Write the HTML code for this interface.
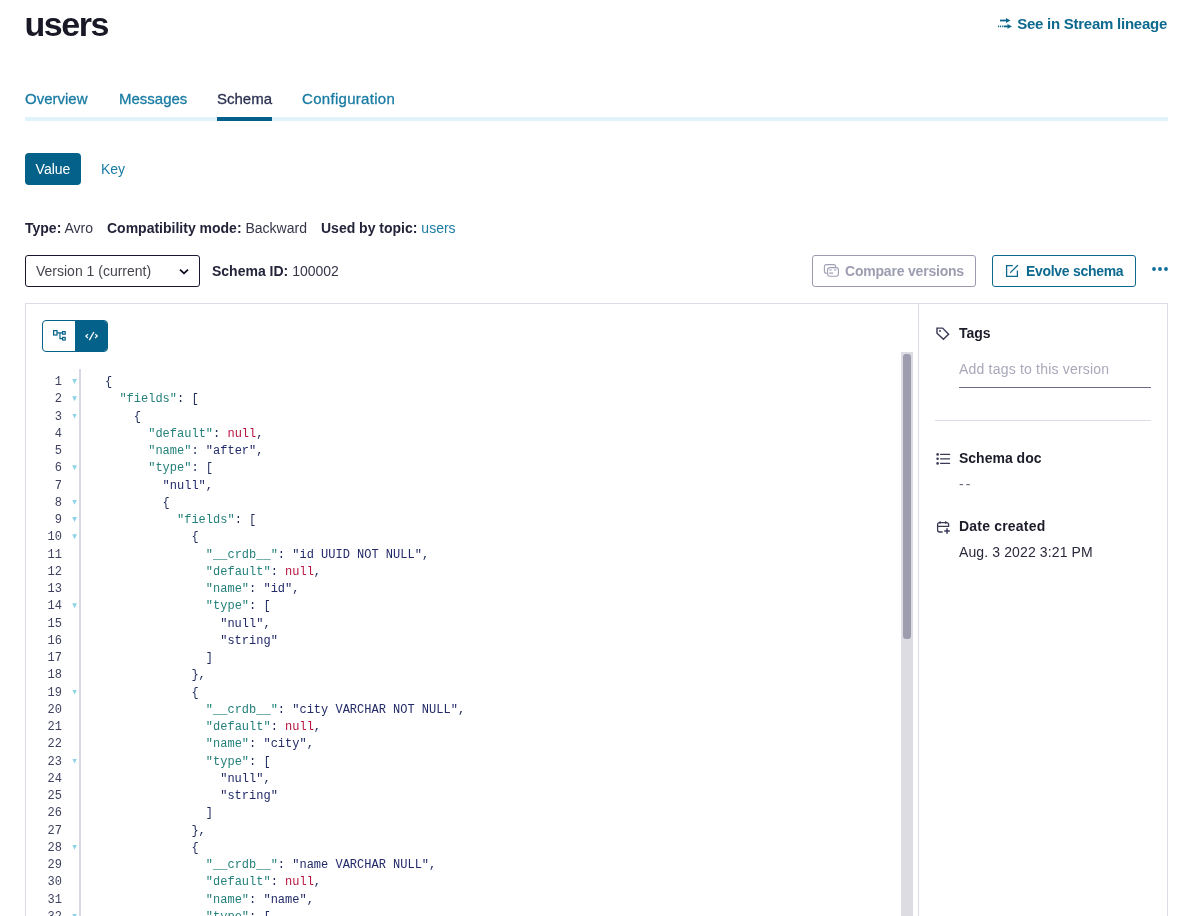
<!DOCTYPE html>
<html><head><meta charset="utf-8">
<style>
*{box-sizing:border-box;margin:0;padding:0}
html,body{width:1189px;height:916px;overflow:hidden;background:#fff}
body{position:relative;will-change:transform;font-family:"Liberation Sans",sans-serif;color:#23233a}
.abs{position:absolute;white-space:nowrap}
.title{left:24.6px;top:4px;font-size:34px;letter-spacing:-1.5px;font-weight:bold;color:#181826;line-height:40px}
.lineage{right:22px;top:14px;font-size:15px;font-weight:bold;letter-spacing:-0.25px;color:#0d6a8e;line-height:20px}
.tab{top:89px;font-size:15px;color:#1a7ba3;line-height:20px;-webkit-text-stroke:0.3px currentColor}
.tabbar{left:25px;top:117px;width:1143px;height:4px;background:#e1f3fa}
.tabact{left:217px;top:117px;width:55px;height:4px;background:#04608a}
.btnval{left:25px;top:153px;width:56px;height:32px;background:#04628a;border-radius:4px;color:#fff;font-size:14px;line-height:32px;text-align:center}
.key{left:101px;top:153px;line-height:32px;font-size:14px;color:#1a7ba3}
.info{top:218px;font-size:14px;line-height:20px;color:#35354a}
.info b{color:#23233a}
.select{left:25px;top:255px;width:175px;height:32px;border:1px solid #181830;border-radius:3px}
.seltext{left:36px;top:261px;font-size:14px;line-height:20px;color:#45454f}
.btn{top:255px;height:32px;border-radius:3px;border:1px solid #9a9ab0;font-size:14px;font-weight:bold;line-height:30px}
.panel{left:25px;top:303px;width:1143px;height:700px;border:1px solid #dcdce4}
.divider{left:918px;top:304px;width:1px;height:700px;background:#dcdce4}
.tog{left:42px;top:320px;width:66px;height:32px;border:1px solid #04628a;border-radius:4px;overflow:hidden}
.code{left:25px;top:374px;font-family:"Liberation Mono",monospace;font-size:12px;line-height:17.26px}
.ln{position:absolute;left:0;width:37px;text-align:right;color:#3e4260}
.gut{left:79px;top:369px;width:2px;height:600px;background:#d8d8e2}
.k{color:#24807a}.s{color:#222a68}.p{color:#1e2a5c}.n{color:#b8143f}
.track{left:901px;top:352px;width:12px;height:600px;background:#dcdce2}
.thumb{left:903px;top:354px;width:8px;height:285px;background:#9e9db0;border-radius:3px}
.side{font-size:14px;line-height:20px}
.row{position:relative;height:17.26px;white-space:pre}
.txt{position:absolute;left:80px}
.fold{position:absolute;left:47.2px;top:5px;width:4.8px;height:5px;background:#8dd3e6;clip-path:polygon(0 0,100% 0,50% 100%)}
</style></head><body>
<div class="abs title">users</div>
<div class="abs lineage"><svg width="16" height="12" viewBox="0 0 16 12" style="position:absolute;left:-19.5px;top:3.5px"><g fill="#0d6a8e"><rect x="2" y="1.6" width="7" height="1.8"/><polygon points="8,0 12.5,2.5 8,5"/><rect x="0" y="7.6" width="1.1" height="1.6"/><rect x="1.9" y="7.6" width="1.1" height="1.6"/><rect x="3.8" y="7.6" width="1.1" height="1.6"/><rect x="5.6" y="7.5" width="4.5" height="1.8"/><polygon points="9.5,6 14,8.4 9.5,10.8"/></g></svg>See in Stream lineage</div>

<div class="abs tab" style="left:25px">Overview</div>
<div class="abs tab" style="left:119px">Messages</div>
<div class="abs tab" style="left:217px;color:#2b3150">Schema</div>
<div class="abs tab" style="left:302px;letter-spacing:0.3px">Configuration</div>
<div class="abs tabbar"></div>
<div class="abs tabact"></div>

<div class="abs btnval">Value</div>
<div class="abs key">Key</div>

<div class="abs info" style="left:25px"><b>Type:</b> Avro</div>
<div class="abs info" style="left:107px"><b>Compatibility mode:</b> Backward</div>
<div class="abs info" style="left:321px"><b>Used by topic:</b> <span style="color:#1a7ba3">users</span></div>

<div class="abs select"></div>
<div class="abs seltext">Version 1 (current)</div>
<svg class="abs" style="left:178.5px;top:267.5px" width="10" height="7" viewBox="0 0 10 7"><path d="M1 1.6 L5 5.4 L9 1.6" fill="none" stroke="#0a0a1e" stroke-width="1.7"/></svg>
<div class="abs info" style="left:212px;top:261px"><b>Schema ID:</b> 100002</div>

<div class="abs btn" style="left:812px;width:164px;color:#9d9db2;"><svg style="position:absolute;left:10px;top:7px" width="17" height="15" viewBox="0 0 17 15" fill="none" stroke="#a0a0b4" stroke-width="1.1"><path d="M4.4 10.2 H3.4 a2 2 0 0 1 -2 -2 V3.6 a2 2 0 0 1 2 -2 H10.6 a2 2 0 0 1 2 2 V4.4"/><rect x="4.6" y="4.6" width="10.8" height="8.7" rx="2.2"/><path d="M6.2 7 H8.8 M10.9 7 H13.4 M6.2 10.2 H10.2" stroke-width="1.2"/></svg><span style="position:absolute;left:32px;letter-spacing:-0.2px">Compare versions</span></div>
<div class="abs btn" style="left:992px;width:144px;color:#0d6a8e;border-color:#0d6a8e"><svg style="position:absolute;left:12px;top:8px" width="14" height="14" viewBox="0 0 14 14" fill="none" stroke="#0d6a8e" stroke-width="1.3"><path d="M7.8 1.6 H1.6 V12.3 H12.4 V6.4"/><path d="M5.6 8.4 L12.5 1.5" stroke-linecap="round"/></svg><span style="position:absolute;left:33px;letter-spacing:-0.3px">Evolve schema</span></div>
<div class="abs" style="left:1152px;top:267px;font-size:0"><svg width="16" height="4"><circle cx="2" cy="2" r="1.9" fill="#0a6e9a"/><circle cx="8" cy="2" r="1.9" fill="#0a6e9a"/><circle cx="14" cy="2" r="1.9" fill="#0a6e9a"/></svg></div>

<div class="abs panel"></div>
<div class="abs divider"></div>
<div class="abs tog"><div style="position:absolute;left:32.2px;top:0;width:34px;height:32px;background:#04628a"></div>
<svg style="position:absolute;left:8px;top:8px" width="16" height="13" viewBox="0 0 16 13" fill="none" stroke="#04628a" stroke-width="1.2"><rect x="2.6" y="1.6" width="3.4" height="4.4"/><rect x="11.6" y="2.6" width="2.6" height="2.6"/><rect x="11.6" y="8.4" width="2.6" height="2.6"/><path d="M6 3.9 H11.6 M9 3.9 V9.7 H11.6"/></svg>
<svg style="position:absolute;left:42px;top:9.8px" width="14" height="12" viewBox="0 0 14 12" fill="none" stroke="#fff" stroke-width="1.1"><path d="M3.1 3.1 L0.9 5.0 L2.9 7.1 M10.3 3.1 L12.3 5.0 L10.0 7.1 M8.9 1.0 L4.3 9.1" stroke-width="1.25"/></svg></div>

<div class="abs gut"></div>
<div class="abs track"></div>
<div class="abs thumb"></div>

<div class="abs code" id="code">
<div class="row"><span class="ln">1</span><i class="fold"></i><span class="txt"><span class="p">{</span></span></div>
<div class="row"><span class="ln">2</span><i class="fold"></i><span class="txt">&nbsp;&nbsp;<span class="k">&quot;fields&quot;</span><span class="p">: </span><span class="p">[</span></span></div>
<div class="row"><span class="ln">3</span><i class="fold"></i><span class="txt">&nbsp;&nbsp;&nbsp;&nbsp;<span class="p">{</span></span></div>
<div class="row"><span class="ln">4</span><span class="txt">&nbsp;&nbsp;&nbsp;&nbsp;&nbsp;&nbsp;<span class="k">&quot;default&quot;</span><span class="p">: </span><span class="n">null</span><span class="p">,</span></span></div>
<div class="row"><span class="ln">5</span><span class="txt">&nbsp;&nbsp;&nbsp;&nbsp;&nbsp;&nbsp;<span class="k">&quot;name&quot;</span><span class="p">: </span><span class="s">&quot;after&quot;</span><span class="p">,</span></span></div>
<div class="row"><span class="ln">6</span><i class="fold"></i><span class="txt">&nbsp;&nbsp;&nbsp;&nbsp;&nbsp;&nbsp;<span class="k">&quot;type&quot;</span><span class="p">: </span><span class="p">[</span></span></div>
<div class="row"><span class="ln">7</span><span class="txt">&nbsp;&nbsp;&nbsp;&nbsp;&nbsp;&nbsp;&nbsp;&nbsp;<span class="s">&quot;null&quot;</span><span class="p">,</span></span></div>
<div class="row"><span class="ln">8</span><i class="fold"></i><span class="txt">&nbsp;&nbsp;&nbsp;&nbsp;&nbsp;&nbsp;&nbsp;&nbsp;<span class="p">{</span></span></div>
<div class="row"><span class="ln">9</span><i class="fold"></i><span class="txt">&nbsp;&nbsp;&nbsp;&nbsp;&nbsp;&nbsp;&nbsp;&nbsp;&nbsp;&nbsp;<span class="k">&quot;fields&quot;</span><span class="p">: </span><span class="p">[</span></span></div>
<div class="row"><span class="ln">10</span><i class="fold"></i><span class="txt">&nbsp;&nbsp;&nbsp;&nbsp;&nbsp;&nbsp;&nbsp;&nbsp;&nbsp;&nbsp;&nbsp;&nbsp;<span class="p">{</span></span></div>
<div class="row"><span class="ln">11</span><span class="txt">&nbsp;&nbsp;&nbsp;&nbsp;&nbsp;&nbsp;&nbsp;&nbsp;&nbsp;&nbsp;&nbsp;&nbsp;&nbsp;&nbsp;<span class="k">&quot;__crdb__&quot;</span><span class="p">: </span><span class="s">&quot;id UUID NOT NULL&quot;</span><span class="p">,</span></span></div>
<div class="row"><span class="ln">12</span><span class="txt">&nbsp;&nbsp;&nbsp;&nbsp;&nbsp;&nbsp;&nbsp;&nbsp;&nbsp;&nbsp;&nbsp;&nbsp;&nbsp;&nbsp;<span class="k">&quot;default&quot;</span><span class="p">: </span><span class="n">null</span><span class="p">,</span></span></div>
<div class="row"><span class="ln">13</span><span class="txt">&nbsp;&nbsp;&nbsp;&nbsp;&nbsp;&nbsp;&nbsp;&nbsp;&nbsp;&nbsp;&nbsp;&nbsp;&nbsp;&nbsp;<span class="k">&quot;name&quot;</span><span class="p">: </span><span class="s">&quot;id&quot;</span><span class="p">,</span></span></div>
<div class="row"><span class="ln">14</span><i class="fold"></i><span class="txt">&nbsp;&nbsp;&nbsp;&nbsp;&nbsp;&nbsp;&nbsp;&nbsp;&nbsp;&nbsp;&nbsp;&nbsp;&nbsp;&nbsp;<span class="k">&quot;type&quot;</span><span class="p">: </span><span class="p">[</span></span></div>
<div class="row"><span class="ln">15</span><span class="txt">&nbsp;&nbsp;&nbsp;&nbsp;&nbsp;&nbsp;&nbsp;&nbsp;&nbsp;&nbsp;&nbsp;&nbsp;&nbsp;&nbsp;&nbsp;&nbsp;<span class="s">&quot;null&quot;</span><span class="p">,</span></span></div>
<div class="row"><span class="ln">16</span><span class="txt">&nbsp;&nbsp;&nbsp;&nbsp;&nbsp;&nbsp;&nbsp;&nbsp;&nbsp;&nbsp;&nbsp;&nbsp;&nbsp;&nbsp;&nbsp;&nbsp;<span class="s">&quot;string&quot;</span><span class="p"></span></span></div>
<div class="row"><span class="ln">17</span><span class="txt">&nbsp;&nbsp;&nbsp;&nbsp;&nbsp;&nbsp;&nbsp;&nbsp;&nbsp;&nbsp;&nbsp;&nbsp;&nbsp;&nbsp;<span class="p">]</span></span></div>
<div class="row"><span class="ln">18</span><span class="txt">&nbsp;&nbsp;&nbsp;&nbsp;&nbsp;&nbsp;&nbsp;&nbsp;&nbsp;&nbsp;&nbsp;&nbsp;<span class="p">},</span></span></div>
<div class="row"><span class="ln">19</span><i class="fold"></i><span class="txt">&nbsp;&nbsp;&nbsp;&nbsp;&nbsp;&nbsp;&nbsp;&nbsp;&nbsp;&nbsp;&nbsp;&nbsp;<span class="p">{</span></span></div>
<div class="row"><span class="ln">20</span><span class="txt">&nbsp;&nbsp;&nbsp;&nbsp;&nbsp;&nbsp;&nbsp;&nbsp;&nbsp;&nbsp;&nbsp;&nbsp;&nbsp;&nbsp;<span class="k">&quot;__crdb__&quot;</span><span class="p">: </span><span class="s">&quot;city VARCHAR NOT NULL&quot;</span><span class="p">,</span></span></div>
<div class="row"><span class="ln">21</span><span class="txt">&nbsp;&nbsp;&nbsp;&nbsp;&nbsp;&nbsp;&nbsp;&nbsp;&nbsp;&nbsp;&nbsp;&nbsp;&nbsp;&nbsp;<span class="k">&quot;default&quot;</span><span class="p">: </span><span class="n">null</span><span class="p">,</span></span></div>
<div class="row"><span class="ln">22</span><span class="txt">&nbsp;&nbsp;&nbsp;&nbsp;&nbsp;&nbsp;&nbsp;&nbsp;&nbsp;&nbsp;&nbsp;&nbsp;&nbsp;&nbsp;<span class="k">&quot;name&quot;</span><span class="p">: </span><span class="s">&quot;city&quot;</span><span class="p">,</span></span></div>
<div class="row"><span class="ln">23</span><i class="fold"></i><span class="txt">&nbsp;&nbsp;&nbsp;&nbsp;&nbsp;&nbsp;&nbsp;&nbsp;&nbsp;&nbsp;&nbsp;&nbsp;&nbsp;&nbsp;<span class="k">&quot;type&quot;</span><span class="p">: </span><span class="p">[</span></span></div>
<div class="row"><span class="ln">24</span><span class="txt">&nbsp;&nbsp;&nbsp;&nbsp;&nbsp;&nbsp;&nbsp;&nbsp;&nbsp;&nbsp;&nbsp;&nbsp;&nbsp;&nbsp;&nbsp;&nbsp;<span class="s">&quot;null&quot;</span><span class="p">,</span></span></div>
<div class="row"><span class="ln">25</span><span class="txt">&nbsp;&nbsp;&nbsp;&nbsp;&nbsp;&nbsp;&nbsp;&nbsp;&nbsp;&nbsp;&nbsp;&nbsp;&nbsp;&nbsp;&nbsp;&nbsp;<span class="s">&quot;string&quot;</span><span class="p"></span></span></div>
<div class="row"><span class="ln">26</span><span class="txt">&nbsp;&nbsp;&nbsp;&nbsp;&nbsp;&nbsp;&nbsp;&nbsp;&nbsp;&nbsp;&nbsp;&nbsp;&nbsp;&nbsp;<span class="p">]</span></span></div>
<div class="row"><span class="ln">27</span><span class="txt">&nbsp;&nbsp;&nbsp;&nbsp;&nbsp;&nbsp;&nbsp;&nbsp;&nbsp;&nbsp;&nbsp;&nbsp;<span class="p">},</span></span></div>
<div class="row"><span class="ln">28</span><i class="fold"></i><span class="txt">&nbsp;&nbsp;&nbsp;&nbsp;&nbsp;&nbsp;&nbsp;&nbsp;&nbsp;&nbsp;&nbsp;&nbsp;<span class="p">{</span></span></div>
<div class="row"><span class="ln">29</span><span class="txt">&nbsp;&nbsp;&nbsp;&nbsp;&nbsp;&nbsp;&nbsp;&nbsp;&nbsp;&nbsp;&nbsp;&nbsp;&nbsp;&nbsp;<span class="k">&quot;__crdb__&quot;</span><span class="p">: </span><span class="s">&quot;name VARCHAR NULL&quot;</span><span class="p">,</span></span></div>
<div class="row"><span class="ln">30</span><span class="txt">&nbsp;&nbsp;&nbsp;&nbsp;&nbsp;&nbsp;&nbsp;&nbsp;&nbsp;&nbsp;&nbsp;&nbsp;&nbsp;&nbsp;<span class="k">&quot;default&quot;</span><span class="p">: </span><span class="n">null</span><span class="p">,</span></span></div>
<div class="row"><span class="ln">31</span><span class="txt">&nbsp;&nbsp;&nbsp;&nbsp;&nbsp;&nbsp;&nbsp;&nbsp;&nbsp;&nbsp;&nbsp;&nbsp;&nbsp;&nbsp;<span class="k">&quot;name&quot;</span><span class="p">: </span><span class="s">&quot;name&quot;</span><span class="p">,</span></span></div>
<div class="row"><span class="ln">32</span><i class="fold"></i><span class="txt">&nbsp;&nbsp;&nbsp;&nbsp;&nbsp;&nbsp;&nbsp;&nbsp;&nbsp;&nbsp;&nbsp;&nbsp;&nbsp;&nbsp;<span class="k">&quot;type&quot;</span><span class="p">: </span><span class="p">[</span></span></div>
<div class="row"><span class="ln">33</span><span class="txt">&nbsp;&nbsp;&nbsp;&nbsp;&nbsp;&nbsp;&nbsp;&nbsp;&nbsp;&nbsp;&nbsp;&nbsp;&nbsp;&nbsp;&nbsp;&nbsp;<span class="s">&quot;null&quot;</span><span class="p">,</span></span></div>
<div class="row"><span class="ln">34</span><span class="txt">&nbsp;&nbsp;&nbsp;&nbsp;&nbsp;&nbsp;&nbsp;&nbsp;&nbsp;&nbsp;&nbsp;&nbsp;&nbsp;&nbsp;&nbsp;&nbsp;<span class="s">&quot;string&quot;</span><span class="p"></span></span></div>
</div>


<svg class="abs" style="left:930px;top:322px" width="24" height="24" viewBox="0 0 24 24" fill="none" stroke="#3a3a58" stroke-width="1.45" stroke-linejoin="miter"><path d="M7 6.1 H12.6 L18.6 12.2 L13.4 17.3 L7 11.2 Z"/><rect x="9.2" y="8.1" width="1.7" height="1.7" fill="#3a3a58" stroke="none"/></svg>
<svg class="abs" style="left:930px;top:446px" width="24" height="24" viewBox="0 0 24 24" fill="#3a3a58" stroke="#3a3a58" stroke-width="1.2" stroke-linecap="round"><circle cx="7.6" cy="8.4" r="1.3" stroke="none"/><circle cx="7.6" cy="12.8" r="1.3" stroke="none"/><circle cx="7.6" cy="17.4" r="1.3" stroke="none"/><path d="M10.6 8.4 H19.6 M10.6 12.8 H19.6 M10.6 17.4 H19.6"/></svg>
<svg class="abs" style="left:930px;top:515px" width="24" height="24" viewBox="0 0 24 24" fill="none" stroke="#3a3a58" stroke-width="1.3"><path d="M12.6 17 H9.6 a2 2 0 0 1 -2 -2 V9.6 a2 2 0 0 1 2 -2 H16.6 a2 2 0 0 1 2 2 V11.4 H7.6"/><path d="M10.1 6.2 V8.8 M15.7 6.2 V8.8"/><path d="M17 13.2 V18.8 M14.2 16 H19.8" stroke-width="1.5"/></svg>
<div class="abs side" style="left:959px;top:323px;font-weight:bold;color:#1c1c2a">Tags</div>
<div class="abs side" style="left:959px;top:359px;color:#a8a8ba;letter-spacing:0.2px">Add tags to this version</div>
<div class="abs" style="left:959px;top:387px;width:192px;height:1px;background:#6e6e8a"></div>
<div class="abs" style="left:935px;top:420px;width:216px;height:1px;background:#dcdce4"></div>
<div class="abs side" style="left:959px;top:448px;font-weight:bold;color:#1c1c2a">Schema doc</div>
<div class="abs side" style="left:959px;top:474px;color:#6a6a7e;letter-spacing:2.2px">--</div>
<div class="abs side" style="left:959px;top:516px;font-weight:bold;color:#1c1c2a;letter-spacing:0.2px">Date created</div>
<div class="abs side" style="left:959px;top:542px;color:#2a2a3e;letter-spacing:0.12px">Aug. 3 2022 3:21 PM</div>
</body></html>
